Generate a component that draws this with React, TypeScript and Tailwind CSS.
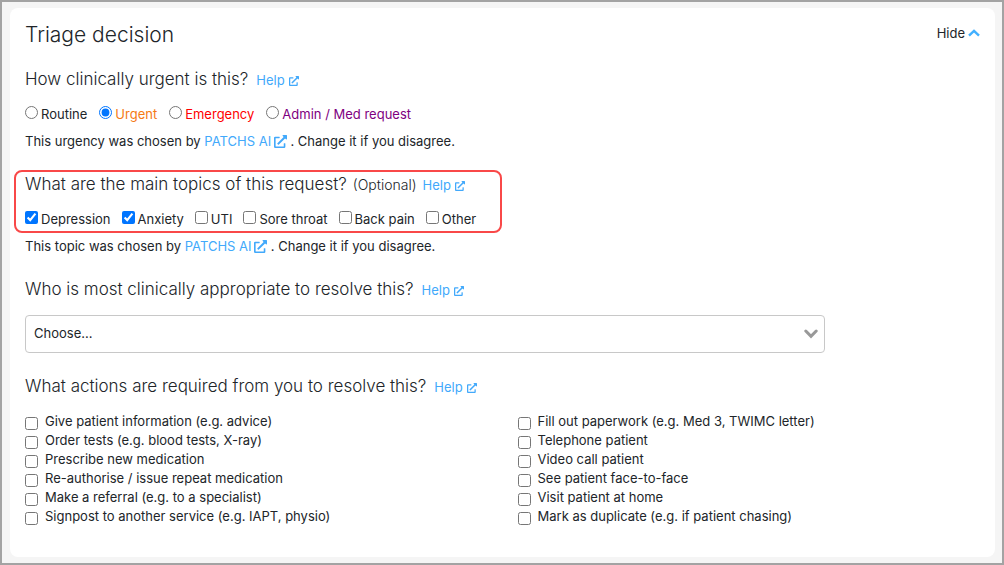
import React, { useState } from 'react';
import { FaExternalLinkAlt } from 'react-icons/fa';

const urgencies = [
  { value: 'routine', label: 'Routine', color: 'text-[#212529]' },
  { value: 'urgent', label: 'Urgent', color: 'text-[#f57a14]' },
  { value: 'emergency', label: 'Emergency', color: 'text-[#ff0000]' },
  { value: 'admin', label: 'Admin / Med request', color: 'text-[#800080]' },
];

const topicNames = ['Depression', 'Anxiety', 'UTI', 'Sore throat', 'Back pain', 'Other'];

const actionColumns = [
  [
    'Give patient information (e.g. advice)',
    'Order tests (e.g. blood tests, X-ray)',
    'Prescribe new medication',
    'Re-authorise / issue repeat medication',
    'Make a referral (e.g. to a specialist)',
    'Signpost to another service (e.g. IAPT, physio)',
  ],
  [
    'Fill out paperwork (e.g. Med 3, TWIMC letter)',
    'Telephone patient',
    'Video call patient',
    'See patient face-to-face',
    'Visit patient at home',
    'Mark as duplicate (e.g. if patient chasing)',
  ],
];

const HelpLink: React.FC = () => (
  <a href="#help" className="inline-flex items-center gap-1 text-[13px] text-[#42a9fb]">
    Help <FaExternalLinkAlt className="size-[10px]" />
  </a>
);

const ChosenBy: React.FC<{ what: string }> = ({ what }) => (
  <p className="leading-5">
    This {what} was chosen by{' '}
    <a href="#patchs-ai" className="text-[#42a9fb]">
      PATCHS AI <FaExternalLinkAlt className="-ml-px inline size-[13px] align-[-2px]" />
    </a>{' '}
    . Change it if you disagree.
  </p>
);

const App: React.FC = () => {
  const [open, setOpen] = useState(true);
  const [urgency, setUrgency] = useState('urgent');
  const [topics, setTopics] = useState(['Depression', 'Anxiety']);

  const toggleTopic = (name: string) => {
    setTopics(topics.includes(name) ? topics.filter((t) => t !== name) : [...topics, name]);
  };

  return (
    <div className="flex min-h-screen flex-col border-2 border-[#a3a3a3] bg-[#f5f5f5] font-['Inter',sans-serif] text-[13px] text-[#212529]">
      <main className="mt-[6px] mr-[7px] mb-[6px] ml-2 grow rounded-lg bg-white p-[15px]">
        <div className="flex items-start justify-between">
          <h1 className="text-[21px] leading-6 font-light">Triage decision</h1>
          <button type="button" onClick={() => setOpen(!open)} aria-expanded={open} className="flex items-center gap-[3px] leading-5">
            Hide
            <svg viewBox="0 0 12 8" className="h-2 w-3" fill="none" stroke="#42b0ff" strokeWidth="2.4">
              <path d="M1 6.6 L6 1.8 L11 6.6" />
            </svg>
          </button>
        </div>

        {open && (
          <form>
            {/* Urgency */}
            <div role="radiogroup" aria-labelledby="urgency-title" className="mt-5">
              <div className="flex items-baseline gap-2">
                <h2 id="urgency-title" className="text-[17px] leading-6 font-light">How clinically urgent is this?</h2>
                <HelpLink />
              </div>
              <div className="mt-[13px] mb-[7px] flex flex-wrap gap-x-3">
                {urgencies.map((u) => (
                  <label key={u.value} className={`flex items-baseline gap-[3px] leading-5 ${u.color}`}>
                    <input type="radio" name="urgency" value={u.value} checked={urgency === u.value} onChange={() => setUrgency(u.value)} className="size-[13px]" />
                    {u.label}
                  </label>
                ))}
              </div>
              <ChosenBy what="urgency" />
            </div>

            {/* Topics */}
            <div role="group" aria-labelledby="topics-title" className="mt-[19px]">
              <div className="-ml-[11px] max-w-[488px] rounded-lg border-2 border-[#f94848] px-[9px] pb-[2px]">
                <div className="flex items-baseline gap-[6px]">
                  <h2 id="topics-title" className="text-[17px] leading-6 font-light">What are the main topics of this request?</h2>
                  <span className="text-sm font-light">(Optional)</span>
                  <HelpLink />
                </div>
                <div className="mt-[13px] flex flex-wrap gap-x-[11px]">
                  {topicNames.map((name) => (
                    <label key={name} className="flex items-baseline gap-[3px] leading-5">
                      <input type="checkbox" checked={topics.includes(name)} onChange={() => toggleTopic(name)} className="size-[13px]" />
                      {name}
                    </label>
                  ))}
                </div>
              </div>
              <div className="mt-[3px]">
                <ChosenBy what="topic" />
              </div>
            </div>

            {/* Resolver */}
            <div className="mt-[21px]">
              <div className="flex items-baseline gap-2">
                <label htmlFor="resolver" className="text-[17px] leading-6 font-light">Who is most clinically appropriate to resolve this?</label>
                <HelpLink />
              </div>
              <div className="relative mt-[14px] max-w-[800px]">
                <select id="resolver" className="block h-[38px] w-full appearance-none rounded border border-[#c8c8c8] bg-white px-2">
                  <option>Choose...</option>
                </select>
                <svg viewBox="0 0 14 10" className="pointer-events-none absolute top-[14px] right-[7px] h-[10px] w-[14px]" fill="none" stroke="#999" strokeWidth="3" strokeLinecap="round">
                  <path d="M1.8 2 L7 7.4 L12.2 2" />
                </svg>
              </div>
            </div>

            {/* Actions */}
            <div role="group" aria-labelledby="actions-title" className="mt-[21px]">
              <div className="flex items-baseline gap-2">
                <h2 id="actions-title" className="text-[17px] leading-6 font-light">What actions are required from you to resolve this?</h2>
                <HelpLink />
              </div>
              <div className="mt-[14px] grid grid-cols-2 gap-x-[30px]">
                {actionColumns.map((column, idx) => (
                  <ul key={idx}>
                    {column.map((action) => (
                      <li key={action}>
                        <label className="flex items-start gap-[7px] leading-[19px]">
                          <input type="checkbox" className="mt-[5px] size-[13px] shrink-0" />
                          {action}
                        </label>
                      </li>
                    ))}
                  </ul>
                ))}
              </div>
            </div>
          </form>
        )}
      </main>
    </div>
  );
};

export default App;
